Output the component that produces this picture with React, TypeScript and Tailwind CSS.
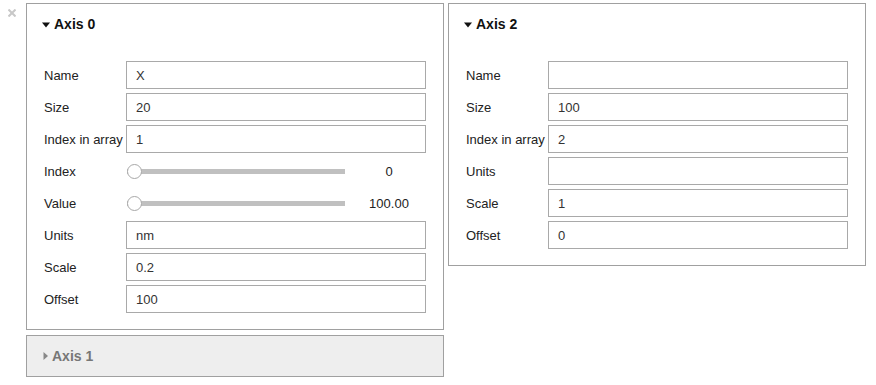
import React from "react";

const font = { fontFamily: '"Liberation Sans", Arial, sans-serif' };

function Row({ label, value }: { label: string; value: string }) {
  return (
    <div className="flex items-center h-[28px]">
      <div className="w-[82px] text-[13px] text-[#222] pt-[2px]">{label}</div>
      <div className="w-[300px] h-[28px] border border-[#a9a9a9] bg-white flex items-center pl-[9px] pt-[2px] text-[13px] text-[#333]">
        {value}
      </div>
    </div>
  );
}

function SliderRow({ label, value }: { label: string; value: string }) {
  return (
    <div className="flex items-center h-[28px]">
      <div className="w-[82px] text-[13px] text-[#222] pt-[2px]">{label}</div>
      <div className="relative w-[218px] h-[16px] flex items-center ml-[1px]">
        <div className="w-full h-[5px] bg-[#c0c0c0]" />
        <div className="absolute left-0 top-[1px] w-[15px] h-[15px] rounded-full border border-[#a8a8a8] bg-white" />
      </div>
      <div className="flex-1 text-center text-[13px] text-[#222] pl-[7px] pt-[2px]">{value}</div>
    </div>
  );
}

function DownTri() {
  return (
    <svg width="8" height="6" viewBox="0 0 8 6" className="mr-[4px]">
      <polygon points="0,0.5 8,0.5 4,5.5" fill="#111" />
    </svg>
  );
}

function RightTri() {
  return (
    <svg width="5" height="8" viewBox="0 0 5 8" className="mr-[4px] ml-[1px]">
      <polygon points="0.5,0 5,4 0.5,8" fill="#888" />
    </svg>
  );
}

function Panel({ title, children }: { title: string; children: React.ReactNode }) {
  return (
    <div className="w-[418px] border border-[#a0a0a0] bg-white">
      <div className="h-[41px] flex items-center pl-[15px] text-[14px] font-bold text-[#111]">
        <DownTri />
        {title}
      </div>
      <div className="px-[17px] pt-[16px] pb-[16px] flex flex-col gap-[4px]">{children}</div>
    </div>
  );
}

export default function App() {
  return (
    <div className="flex w-[876px] h-[385px] bg-white pt-[3px]" style={font}>
      <div className="w-[26px] relative">
        <svg width="8" height="8" viewBox="0 0 8 8" className="absolute left-[8px] top-[6px]">
          <line x1="0.5" y1="0.5" x2="7.5" y2="7.5" stroke="#c8c8c8" strokeWidth="2" />
          <line x1="7.5" y1="0.5" x2="0.5" y2="7.5" stroke="#c8c8c8" strokeWidth="2" />
        </svg>
      </div>
      <div className="flex items-start gap-[4px]">
        <div className="flex flex-col gap-[5px]">
          <Panel title="Axis 0">
            <Row label="Name" value="X" />
            <Row label="Size" value="20" />
            <Row label="Index in array" value="1" />
            <SliderRow label="Index" value="0" />
            <SliderRow label="Value" value="100.00" />
            <Row label="Units" value="nm" />
            <Row label="Scale" value="0.2" />
            <Row label="Offset" value="100" />
          </Panel>
          <div className="w-[418px] h-[42px] border border-[#a0a0a0] bg-[#eeeeee] flex items-center pl-[15px] text-[14px] font-bold text-[#777]">
            <RightTri />
            Axis 1
          </div>
        </div>
        <Panel title="Axis 2">
          <Row label="Name" value="" />
          <Row label="Size" value="100" />
          <Row label="Index in array" value="2" />
          <Row label="Units" value="" />
          <Row label="Scale" value="1" />
          <Row label="Offset" value="0" />
        </Panel>
      </div>
    </div>
  );
}
